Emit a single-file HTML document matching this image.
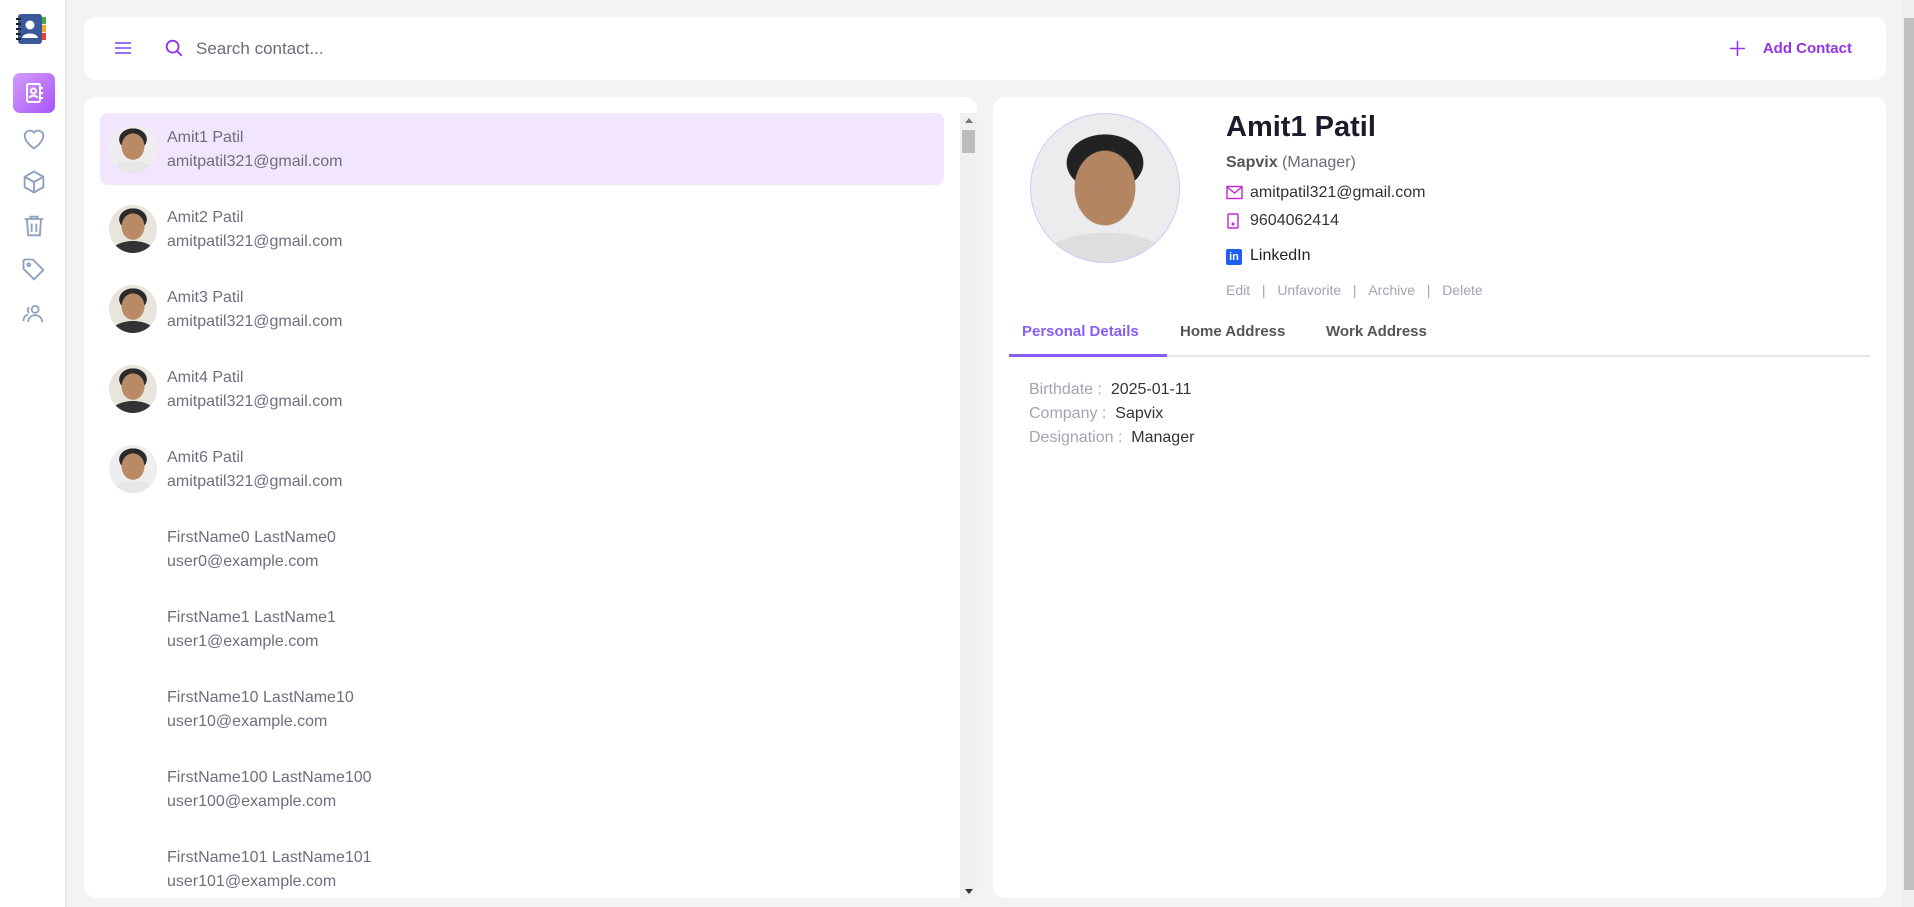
<!DOCTYPE html>
<html><head><meta charset="utf-8"><style>
*{box-sizing:border-box;margin:0;padding:0}
body{width:1914px;height:907px;overflow:hidden;background:#f2f3f5;font-family:"Liberation Sans",sans-serif;position:relative}
.side{position:absolute;left:0;top:0;width:67px;height:907px;background:#fff;border-right:2px solid #e8e9ee}
.ic{position:absolute;left:20px;width:28px;height:28px}
.card{position:absolute;background:#fff;border-radius:12px}
.item{position:absolute;left:16px;width:844px;height:72px}
.av{position:absolute;left:9px;top:12px;width:48px;height:48px;border-radius:50%;background:radial-gradient(ellipse 26% 30% at 50% 45%,#b98a66 0 90%,transparent 93%),radial-gradient(ellipse 30% 24% at 50% 30%,#2a2a2a 0 95%,transparent 97%),radial-gradient(ellipse 48% 26% at 50% 100%,#333 0 95%,transparent 97%),#e9e4dc}
.av.w{background:radial-gradient(ellipse 26% 30% at 50% 45%,#b98a66 0 90%,transparent 93%),radial-gradient(ellipse 30% 24% at 50% 30%,#2a2a2a 0 95%,transparent 97%),radial-gradient(ellipse 48% 26% at 50% 100%,#e6e6e6 0 95%,transparent 97%),#eeeeee}
.nm{position:absolute;left:67px;top:13px;font-size:16px;color:#6e6e7e;line-height:24px}
.sel{background:#f1e6fd;border-radius:8px}
.lbl{color:#a3a3b3}
</style></head><body>
<div class="side">
 <svg style="position:absolute;left:16px;top:14px" width="32" height="30" viewBox="0 0 32 30"><rect x="2" y="0" width="24" height="30" rx="3" fill="#3b5998"/><rect x="26" y="3" width="4" height="7" fill="#3cb043"/><rect x="26" y="11" width="4" height="7" fill="#f5a623"/><rect x="26" y="19" width="4" height="7" fill="#e94235"/><circle cx="14" cy="11" r="4.5" fill="#fff"/><path d="M6 24c1-6 15-6 16 0z" fill="#fff"/><g stroke="#222" stroke-width="2"><line x1="0" y1="5" x2="5" y2="5"/><line x1="0" y1="10" x2="5" y2="10"/><line x1="0" y1="15" x2="5" y2="15"/><line x1="0" y1="20" x2="5" y2="20"/><line x1="0" y1="25" x2="5" y2="25"/></g></svg>
 <div style="position:absolute;left:13px;top:73px;width:42px;height:40px;border-radius:7px;background:linear-gradient(135deg,#d49cfd,#a855f7)"></div>
 <svg class="ic" style="top:79px;left:20px" viewBox="0 0 28 28" fill="none" stroke="#fff" stroke-width="2"><rect x="7" y="5" width="13" height="18" rx="1.5"/><circle cx="13.5" cy="12" r="2.5"/><path d="M9.5 19c1-3 7-3 8 0"/><path d="M22 8v2M22 13v2M22 18v2"/></svg>
 <svg class="ic" style="top:125px" viewBox="0 0 24 24" fill="none" stroke="#8ea0bf" stroke-width="1.6"><path d="M12 20s-8-5-8-11a4.5 4.5 0 0 1 8-2.5A4.5 4.5 0 0 1 20 9c0 6-8 11-8 11z"/></svg>
 <svg class="ic" style="top:168px" viewBox="0 0 24 24" fill="none" stroke="#8ea0bf" stroke-width="1.6"><path d="M12 3l8 4.5v9L12 21l-8-4.5v-9z"/><path d="M4 7.5l8 4.5 8-4.5M12 12v9"/></svg>
 <svg class="ic" style="top:212px" viewBox="0 0 24 24" fill="none" stroke="#8ea0bf" stroke-width="1.6"><path d="M4 6h16M9 6V4h6v2M6 6l1 14h10l1-14M10 10v7M14 10v7"/></svg>
 <svg class="ic" style="top:256px" viewBox="0 0 24 24" fill="none" stroke="#8ea0bf" stroke-width="1.6"><path d="M3 4v7l9 9 8-8-9-9H4z"/><circle cx="7.5" cy="7.5" r="1.2"/></svg>
 <svg class="ic" style="top:300px" viewBox="0 0 24 24" fill="none" stroke="#8ea0bf" stroke-width="1.5"><circle cx="13" cy="8" r="3"/><path d="M7 19c0-4 3-6 6-6s6 2 6 6"/><path d="M8 6.5a2.5 2.5 0 0 0 0 4.5M3 18c0-3 1.5-5 4-5.5"/></svg>
</div>

<div class="card" style="left:84px;top:17px;width:1802px;height:63px">
 <svg style="position:absolute;left:30px;top:23px" width="18" height="16" viewBox="0 0 18 16" stroke="#8b5cf6" stroke-width="1.8"><path d="M1 3h16M1 8h16M1 13h16"/></svg>
 <svg style="position:absolute;left:79px;top:20px" width="22" height="22" viewBox="0 0 24 24" fill="none" stroke="#9333ea" stroke-width="2"><circle cx="10.5" cy="10.5" r="6.5"/><path d="M15.5 15.5l5 5"/></svg>
 <div style="position:absolute;left:112px;top:22px;font-size:17px;color:#6b6b7b">Search contact...</div>
 <svg style="position:absolute;right:141px;top:24px" width="15" height="15" viewBox="0 0 15 15" stroke="#9333ea" stroke-width="1.6"><path d="M7.5 0v15M0 7.5h15"/></svg>
 <div style="position:absolute;right:34px;top:23px;font-size:15px;font-weight:bold;color:#9333ea">Add Contact</div>
</div>

<div class="card" style="left:84px;top:97px;width:893px;height:801px;overflow:hidden">
 <div class="item sel" style="top:16px"><div class="av w"></div><div class="nm">Amit1 Patil<br>amitpatil321@gmail.com</div></div>
 <div class="item" style="top:96px"><div class="av"></div><div class="nm">Amit2 Patil<br>amitpatil321@gmail.com</div></div>
 <div class="item" style="top:176px"><div class="av"></div><div class="nm">Amit3 Patil<br>amitpatil321@gmail.com</div></div>
 <div class="item" style="top:256px"><div class="av"></div><div class="nm">Amit4 Patil<br>amitpatil321@gmail.com</div></div>
 <div class="item" style="top:336px"><div class="av w"></div><div class="nm">Amit6 Patil<br>amitpatil321@gmail.com</div></div>
 <div class="item" style="top:416px"><div class="nm">FirstName0 LastName0<br>user0@example.com</div></div>
 <div class="item" style="top:496px"><div class="nm">FirstName1 LastName1<br>user1@example.com</div></div>
 <div class="item" style="top:576px"><div class="nm">FirstName10 LastName10<br>user10@example.com</div></div>
 <div class="item" style="top:656px"><div class="nm">FirstName100 LastName100<br>user100@example.com</div></div>
 <div class="item" style="top:736px"><div class="nm">FirstName101 LastName101<br>user101@example.com</div></div>
 <div style="position:absolute;left:876px;top:16px;width:17px;height:785px;background:#f0f0f0"></div>
 <div style="position:absolute;left:878px;top:33px;width:13px;height:23px;background:#bdbdbd"></div>
 <div style="position:absolute;left:881px;top:21px;border:4px solid transparent;border-bottom:5px solid #777;border-top:0"></div>
 <div style="position:absolute;left:881px;top:792px;border:4px solid transparent;border-top:5px solid #333;border-bottom:0"></div>
</div>

<div class="card" style="left:993px;top:97px;width:893px;height:801px">
 <div style="position:absolute;left:37px;top:16px;width:150px;height:150px;border-radius:50%;border:1px solid #d9c2fb;background:radial-gradient(ellipse 22% 27% at 50% 50%,#b48563 0 92%,transparent 95%),radial-gradient(ellipse 27% 20% at 50% 33%,#222 0 95%,transparent 97%),radial-gradient(ellipse 45% 20% at 50% 100%,#dedede 0 98%,transparent 100%),#ececee"></div>
 <div style="position:absolute;left:233px;top:14px;font-size:29px;font-weight:bold;color:#1b1b2b">Amit1 Patil</div>
 <div style="position:absolute;left:233px;top:57px;font-size:16px;color:#6b6b7b"><b style="color:#555">Sapvix</b> (Manager)</div>
 <svg style="position:absolute;left:233px;top:88px" width="17" height="15" viewBox="0 0 17 15" fill="none" stroke="#c026d3" stroke-width="1.4"><rect x="1" y="1.5" width="15" height="12"/><path d="M1 2l7.5 6L16 2"/></svg>
 <div style="position:absolute;left:257px;top:87px;font-size:16px;color:#333">amitpatil321@gmail.com</div>
 <svg style="position:absolute;left:234px;top:116px" width="12" height="16" viewBox="0 0 12 16" fill="none" stroke="#c026d3" stroke-width="1.4"><rect x="1" y="1" width="10" height="14" rx="1"/><circle cx="6" cy="11" r=".8" fill="#c026d3"/></svg>
 <div style="position:absolute;left:257px;top:115px;font-size:16px;color:#333">9604062414</div>
 <div style="position:absolute;left:233px;top:152px;width:16px;height:16px;background:#1e5ef0;border-radius:2px;color:#fff;font-size:11px;font-weight:bold;text-align:center;line-height:17px">in</div>
 <div style="position:absolute;left:257px;top:150px;font-size:16px;color:#222">LinkedIn</div>
 <div style="position:absolute;left:233px;top:185px;font-size:14px;color:#a3a3b3;word-spacing:2px">Edit &nbsp;| &nbsp;Unfavorite &nbsp;| &nbsp;Archive &nbsp;| &nbsp;Delete</div>
 <div style="position:absolute;left:16px;top:258px;width:861px;height:2px;background:#e5e5ea"></div>
 <div style="position:absolute;left:16px;top:257px;width:158px;height:3px;background:#8b5cf6"></div>
 <div style="position:absolute;left:29px;top:226px;font-size:15px;font-weight:bold;color:#8b5cf6">Personal Details</div>
 <div style="position:absolute;left:187px;top:226px;font-size:15px;font-weight:bold;color:#555">Home Address</div>
 <div style="position:absolute;left:333px;top:226px;font-size:15px;font-weight:bold;color:#555">Work Address</div>
 <div style="position:absolute;left:36px;top:281px;font-size:16px;line-height:24px;color:#333">
  <div><span class="lbl">Birthdate :</span>&nbsp; 2025-01-11</div>
  <div><span class="lbl">Company :</span>&nbsp; Sapvix</div>
  <div><span class="lbl">Designation :</span>&nbsp; Manager</div>
 </div>
</div>

<div style="position:absolute;left:1902px;top:0;width:12px;height:907px;background:#f0f0f0"></div>
<div style="position:absolute;left:1904px;top:18px;width:10px;height:872px;background:#c1c1c1"></div>
</body></html>
